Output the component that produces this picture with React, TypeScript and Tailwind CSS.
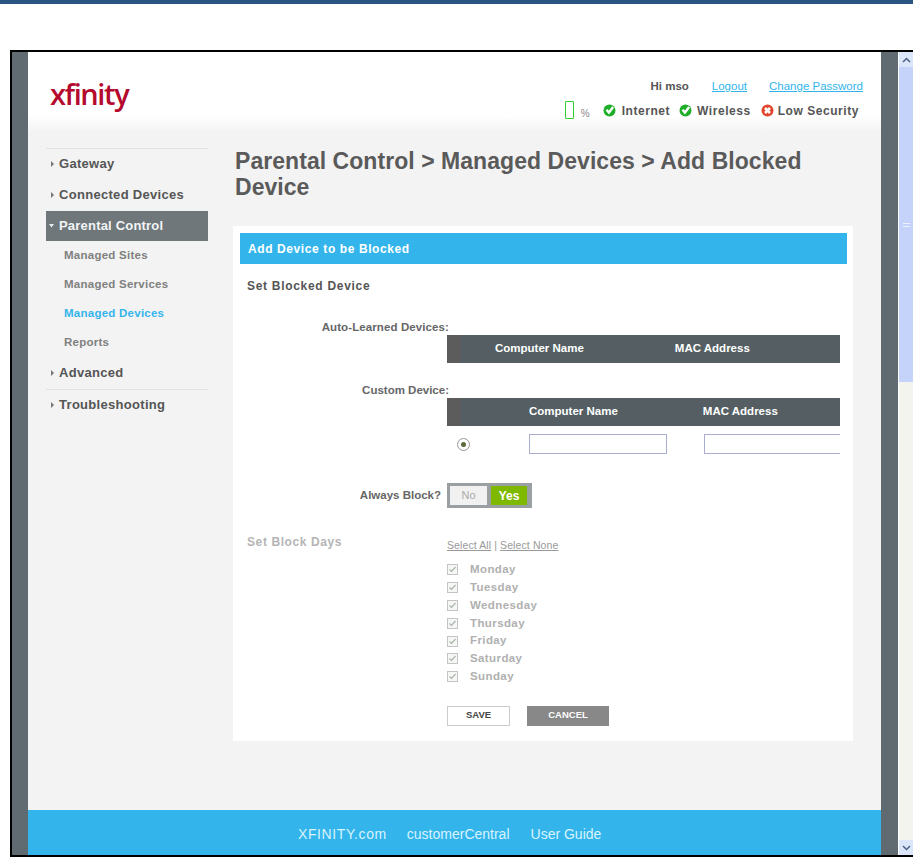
import React from "react";

const FONT = "font-['Liberation_Sans',Arial,sans-serif]";

function StatusIcon({ ok }: { ok: boolean }) {
  return (
    <svg width="13" height="13" viewBox="0 0 13 13" className="shrink-0">
      <circle cx="6.5" cy="6.5" r="6" fill={ok ? "#1fae2a" : "#e2452d"} />
      {ok ? (
        <path d="M3.5 5.8l2.4 2.7 4.2-5.4" fill="none" stroke="#fff" strokeWidth="2.4" />
      ) : (
        <path d="M4 4l5 5M9 4l-5 5" fill="none" stroke="#fff" strokeWidth="2.6" />
      )}
    </svg>
  );
}

function Caret({ open, light }: { open?: boolean; light?: boolean }) {
  const fill = light ? "#e8ecee" : "#777";
  return (
    <svg width="5" height="6" viewBox="0 0 5 6" className="shrink-0">
      {open ? <path d="M0 1h5L2.5 4.5z" fill={fill} /> : <path d="M1 0l3 3-3 3z" fill={fill} />}
    </svg>
  );
}

function NavItem({ label }: { label: string }) {
  return (
    <div className="h-[31px] flex items-center gap-[4px] pl-[4px] pb-[2px] text-[13px] font-bold tracking-[0.3px] text-[#555]">
      <Caret />
      {label}
    </div>
  );
}

function SubItem({ label, active }: { label: string; active?: boolean }) {
  return (
    <div className={`h-[29px] flex items-center pl-[18px] text-[11.5px] font-bold tracking-[0.25px] ${active ? "text-[#33b5ec]" : "text-[#808080]"}`}>
      {label}
    </div>
  );
}

function Check() {
  return (
    <span className="w-[11px] h-[11px] border border-[#c4c4c4] bg-[#f6f6f6] flex items-center justify-center shrink-0">
      <svg width="9" height="9" viewBox="0 0 9 9">
        <path d="M1.5 4.5l2 2 4-4.5" fill="none" stroke="#a9b5a9" strokeWidth="1.2" />
      </svg>
    </span>
  );
}

const DAYS = ["Monday", "Tuesday", "Wednesday", "Thursday", "Friday", "Saturday", "Sunday"];

export default function App() {
  return (
    <div className={`${FONT} w-[913px] h-[857px] bg-white overflow-hidden`}>
      <div className="h-[4px] bg-[#2a5580]" />
      <div className="mt-[46px] ml-[10px] h-[807px] border-t-2 border-l-2 border-b-2 border-black flex">
        <div className="w-[16px] bg-[#5f6b70]" />

        <div className="w-[853px] flex flex-col bg-[#f3f3f3]">
          {/* Header */}
          <div className="h-[80px] bg-gradient-to-b from-white from-80% to-[#f3f3f3] flex justify-between pl-[22px] pr-[18px]">
            <div className="pt-[20px] text-[29px] leading-[44px] font-['Open_Sans',sans-serif] font-semibold tracking-[-1.4px] text-[#b40a2d]">
              xfinity
            </div>
            <div className="flex flex-col items-end">
              <div className="mt-[28px] h-[14px] flex items-center text-[11.5px]">
                <span className="font-bold text-[#555]">Hi mso</span>
                <span className="ml-[23px] underline text-[#33b5ec]">Logout</span>
                <span className="ml-[22px] underline text-[#33b5ec]">Change Password</span>
              </div>
              <div className="mt-[6px] h-[20px] flex items-center pr-[4px] text-[12px] font-bold tracking-[0.55px] text-[#555]">
                <span className="w-[9px] h-[18px] border border-[#2fd12f] rounded-[1px]" />
                <span className="ml-[7px] mt-[6px] text-[10px] font-normal tracking-normal text-[#888]">%</span>
                <span className="ml-[13px]"><StatusIcon ok /></span>
                <span className="ml-[6px] mt-[2px]">Internet</span>
                <span className="ml-[9px]"><StatusIcon ok /></span>
                <span className="ml-[5px] mt-[2px]">Wireless</span>
                <span className="ml-[10px]"><StatusIcon ok={false} /></span>
                <span className="ml-[4px] mt-[2px]">Low Security</span>
              </div>
            </div>
          </div>

          {/* Body */}
          <div className="flex-1 flex pt-[16px] pl-[18px]">
            <div className="w-[162px]">
              <div className="border-t border-[#e2e2e2]">
                <NavItem label="Gateway" />
                <NavItem label="Connected Devices" />
              </div>
              <div className="h-[30px] bg-[#6f777b] flex items-center gap-[5px] pl-[3px] text-[13px] font-bold tracking-[0.2px] text-[#f2f4f5]">
                <Caret open light />
                Parental Control
              </div>
              <SubItem label="Managed Sites" />
              <SubItem label="Managed Services" />
              <SubItem label="Managed Devices" active />
              <SubItem label="Reports" />
              <div className="pt-[1px] border-b border-[#e2e2e2]">
                <NavItem label="Advanced" />
              </div>
              <NavItem label="Troubleshooting" />
            </div>

            <div className="ml-[25px] w-[620px]">
              <h1 className="ml-[2px] h-[78px] text-[23px] leading-[26px] font-bold tracking-[0.05px] text-[#5a5a5a]">
                Parental Control &gt; Managed Devices &gt; Add Blocked Device
              </h1>

              {/* Card */}
              <div className="h-[515px] bg-white pt-[7px] pl-[7px] pr-[6px]">
                <div className="h-[31px] bg-[#33b5ec] flex items-center pl-[8px] text-[12px] font-bold tracking-[0.6px] text-white">
                  Add Device to be Blocked
                </div>
                <div className="mt-[14px] pl-[7px] text-[12px] leading-[16px] font-bold tracking-[0.7px] text-[#555]">
                  Set Blocked Device
                </div>

                <div className="mt-[26px] w-[209px] text-right text-[11.5px] leading-[14px] font-bold tracking-[0.1px] text-[#666]">
                  Auto-Learned Devices:
                </div>
                <div className="ml-[207px] mt-[1px] w-[393px] h-[28px] bg-[#555f63] flex items-center text-[11.5px] font-bold text-white">
                  <span className="w-[14px] h-full bg-[#5c5c5c]" />
                  <span className="ml-[34px]">Computer Name</span>
                  <span className="ml-[91px]">MAC Address</span>
                </div>

                <div className="mt-[20px] w-[209px] text-right text-[11.5px] leading-[14px] font-bold text-[#666]">
                  Custom Device:
                </div>
                <div className="ml-[207px] mt-[1px] w-[393px] h-[28px] bg-[#555f63] flex items-center text-[11.5px] font-bold text-white">
                  <span className="w-[14px] h-full bg-[#5c5c5c]" />
                  <span className="ml-[68px]">Computer Name</span>
                  <span className="ml-[85px]">MAC Address</span>
                </div>
                <div className="ml-[207px] mt-[8px] w-[393px] h-[20px] flex items-center overflow-hidden">
                  <span className="ml-[10px] w-[13px] h-[13px] rounded-full border border-[#999] flex items-center justify-center">
                    <span className="w-[5px] h-[5px] rounded-full bg-[#5a6a3a]" />
                  </span>
                  <span className="ml-[59px] w-[138px] h-[20px] border border-[#a9aed0] bg-white" />
                  <span className="ml-[37px] w-[136px] h-[20px] border-t border-l border-b border-[#a9aed0] bg-white" />
                </div>

                <div className="mt-[29px] flex items-center">
                  <div className="w-[201px] text-right text-[11.5px] font-bold text-[#666]">Always Block?</div>
                  <div className="ml-[6px] w-[85px] h-[25px] bg-[#9a9fa2] flex items-center pl-[3px] gap-[4px]">
                    <span className="w-[37px] h-[19px] bg-[#f1f1f1] flex items-center justify-center text-[11px] font-normal text-[#aaa]">No</span>
                    <span className="w-[36px] h-[19px] bg-[#7fb800] flex items-center justify-center text-[12px] font-bold text-white">Yes</span>
                  </div>
                </div>

                <div className="mt-[26px] flex">
                  <div className="w-[207px] pl-[7px] text-[12px] leading-[16px] font-bold tracking-[0.6px] text-[#b5b5b5]">
                    Set Block Days
                  </div>
                  <div className="mt-[5px]">
                    <div className="text-[10.5px] leading-[13px] tracking-[0.1px] text-[#999]">
                      <span className="underline">Select All</span> | <span className="underline">Select None</span>
                    </div>
                    <div className="mt-[9px]">
                      {DAYS.map((day) => (
                        <div key={day} className="h-[17.8px] flex items-center">
                          <Check />
                          <span className="ml-[12px] text-[11.5px] font-bold tracking-[0.4px] text-[#b0b0b0]">{day}</span>
                        </div>
                      ))}
                    </div>
                    <div className="mt-[20px] flex gap-[17px]">
                      <span className="w-[63px] h-[20px] border border-[#ccc] bg-white flex items-center justify-center text-[9.5px] font-bold text-[#444]">SAVE</span>
                      <span className="w-[82px] h-[20px] bg-[#888] flex items-center justify-center text-[9.5px] font-bold text-white">CANCEL</span>
                    </div>
                  </div>
                </div>
              </div>
            </div>
          </div>

          {/* Footer */}
          <div className="h-[45px] bg-[#33b5ec] flex items-center pl-[270px] pt-[3px] text-[14px] text-[#d9f3fd]">
            <span className="tracking-[0.6px]">XFINITY.com</span>
            <span className="ml-[20px]">customerCentral</span>
            <span className="ml-[21px]">User Guide</span>
          </div>
        </div>

        <div className="w-[17px] bg-[#5f6b70]" />
        <div className="w-[1px] bg-white" />

        {/* Scrollbar */}
        <div className="w-[14px] flex flex-col bg-[#f4f4ee]">
          <div className="h-[15px] bg-[#dbe6fb] flex items-center justify-center">
            <svg width="9" height="6" viewBox="0 0 9 6"><path d="M1 5l3.5-3.5L8 5" fill="none" stroke="#4d6185" strokeWidth="1.5" /></svg>
          </div>
          <div className="h-[315px] bg-[#c5d3fb] flex items-center justify-center">
            <span className="w-[7px] h-[4px] border-t border-b border-[#eef2ff]" />
          </div>
          <div className="flex-1" />
          <div className="h-[15px] bg-[#dbe6fb] flex items-center justify-center">
            <svg width="9" height="6" viewBox="0 0 9 6"><path d="M1 1l3.5 3.5L8 1" fill="none" stroke="#4d6185" strokeWidth="1.5" /></svg>
          </div>
        </div>
      </div>
    </div>
  );
}
